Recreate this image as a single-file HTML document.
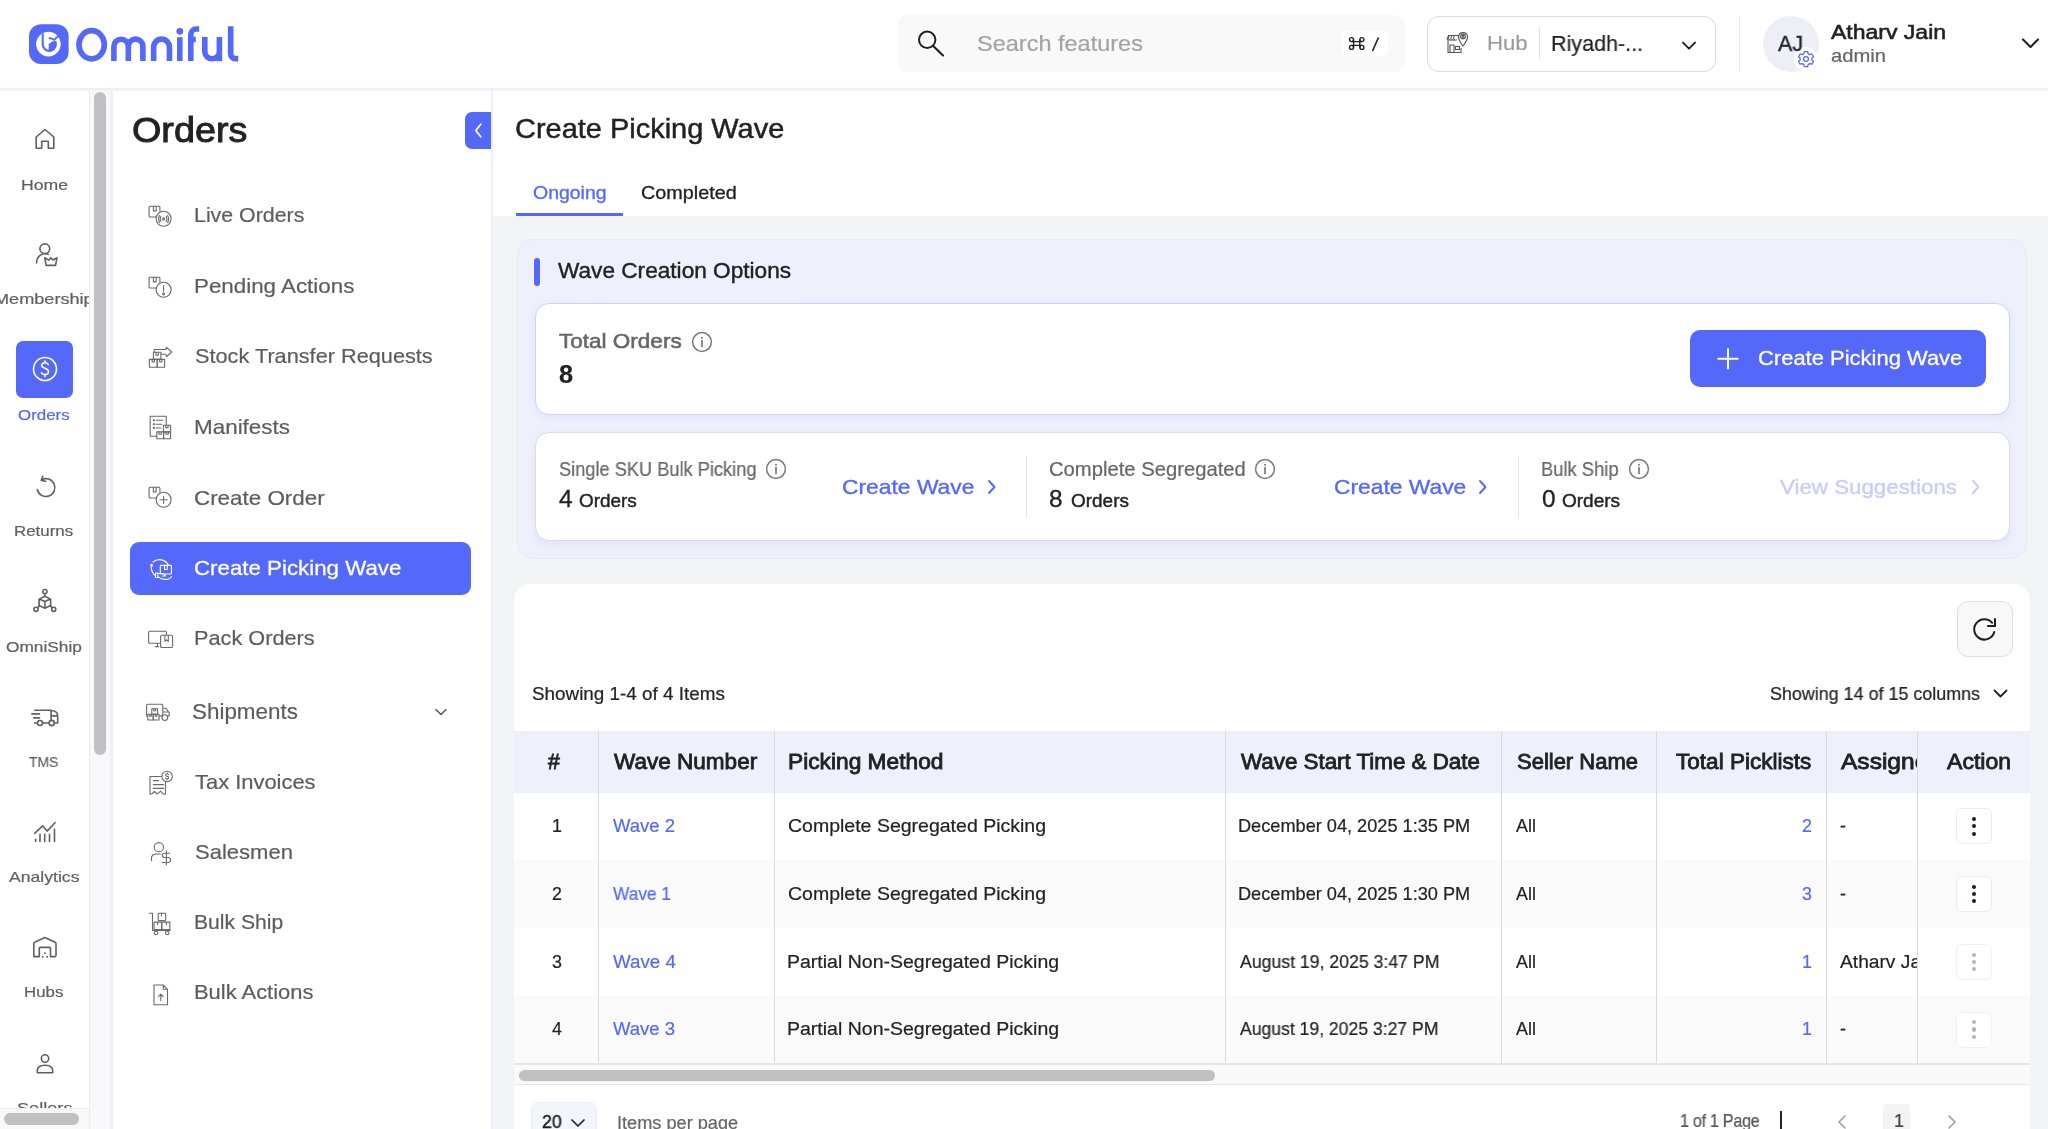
<!DOCTYPE html>
<html><head><meta charset="utf-8">
<style>
html,body{margin:0;padding:0;}
body{width:2048px;height:1129px;overflow:hidden;position:relative;background:#fff;font-family:"Liberation Sans",sans-serif;}
.a{position:absolute;box-sizing:border-box;}
.t{position:absolute;white-space:nowrap;line-height:1;will-change:transform;font-family:"Liberation Sans",sans-serif;}
.clip{position:absolute;overflow:hidden;}
svg{position:absolute;overflow:visible;}
</style></head><body>
<!-- HEADER -->
<div class="a" style="left:0;top:88px;width:2048px;height:2px;background:#eceefd"></div><div class="a" style="left:0;top:90px;width:2048px;height:1px;background:#f2f3fd"></div>
<svg style="left:0;top:0" width="260" height="90" viewBox="0 0 260 90">
  <rect x="29" y="24.3" width="39.6" height="39.6" rx="12" fill="#5468fa"/>
  <circle cx="48.4" cy="44.1" r="12.3" fill="#fff"/>
  <path d="M42.7 33.2 V44.3 A6.6 6.6 0 0 0 55.9 44.3 A6.8 6.8 0 0 0 55.2 41.2" fill="none" stroke="#5468fa" stroke-width="2"/>
  <path d="M48.7 51 V44.1 L53.2 41 L55.5 41.5 A6.7 6.7 0 0 1 48.7 51 Z" fill="#5468fa"/>
  <path d="M48.8 37.9 Q52 38.1 54.2 39.8 L58.5 36" fill="none" stroke="#5468fa" stroke-width="2"/>
  <g fill="none" stroke="#5468fa" stroke-width="5.6">
    <ellipse cx="91.65" cy="44.75" rx="12.7" ry="14.1"/>
    <path d="M113.9 61 V46.4 A7.2 7.2 0 0 1 128.3 46.4 V61 M128.3 46.4 A7.3 7.3 0 0 1 142.9 46.4 V61"/>
    <path d="M153.65 61 V47 A7.9 7.9 0 0 1 169.45 47 V61"/>
    <path d="M179.8 37.2 V61"/>
    <path d="M190.8 61 V34.5 A5.5 5.5 0 0 1 196.3 29 H199.2 M190.8 39.45 H195.8"/>
    <path d="M204.8 37 V51.5 A7.3 7.3 0 0 0 219.4 51.5 M219.4 37 V61.2"/>
    <path d="M230.7 26.2 V54 A4.6 4.6 0 0 0 235.3 58.6 H238.2"/>
  </g>
  <circle cx="179.8" cy="31.3" r="3.4" fill="#5468fa"/>
</svg>
<!-- search -->
<div class="a" style="left:897px;top:15px;width:508px;height:57px;background:#f9f9f9;border-radius:11px"></div>
<svg style="left:910px;top:24px" width="40" height="40" viewBox="0 0 40 40">
  <circle cx="17.2" cy="15.8" r="8.2" fill="none" stroke="#1f1f1f" stroke-width="2"/>
  <path d="M23 21.7 L33 31.4" stroke="#1f1f1f" stroke-width="2.1" stroke-linecap="round"/>
</svg>
<div class="a" style="left:1341px;top:31px;width:47px;height:24.5px;background:#fff;border-radius:6px"></div>
<svg style="left:1345px;top:33px" width="40" height="22" viewBox="0 0 40 22">
  <g fill="none" stroke="#1f1f1f" stroke-width="1.4">
  <path d="M8.6 6.5 V14.5 M14.8 6.5 V14.5 M6.3 8.6 H17.1 M6.3 12.4 H17.1"/>
  <circle cx="6.5" cy="6.6" r="2"/><circle cx="16.9" cy="6.6" r="2"/><circle cx="6.5" cy="14.4" r="2"/><circle cx="16.9" cy="14.4" r="2"/>
  <path d="M33.5 4.5 L27.5 18" stroke-width="1.6"/>
  </g>
</svg>
<!-- hub -->
<div class="a" style="left:1427px;top:16px;width:289px;height:56px;border:1.5px solid #d9d9d9;border-radius:12px;background:#fff"></div>
<svg style="left:1444px;top:28px" width="28" height="28" viewBox="0 0 28 28">
  <g fill="none" stroke="#555" stroke-width="1.1">
   <path d="M3 11.5 L4.5 7.5 H14 L15 10"/>
   <path d="M3 11.5 Q4 13 5.3 11.5 Q6.6 13 7.9 11.5 Q9.2 13 10.5 11.5 Q11.8 13 13.1 11.5"/>
   <path d="M5 8 L4 11.5 M7.5 8 L6.8 11.5 M10 8 L9.6 11.5"/>
   <path d="M4 13 V24.5 H17 V20"/>
   <path d="M6 24.5 V17 H10 V24.5"/>
   <rect x="11.5" y="18.5" width="4" height="3"/>
   <path d="M19 18 C15.5 13.5 14.5 11 14.5 8.5 A4.6 4.6 0 0 1 23.6 8.5 C23.6 11 22.5 13.5 19 18 Z"/>
   <circle cx="19" cy="8.5" r="2.4"/><circle cx="19" cy="8.5" r="0.9"/>
  </g>
</svg>
<div class="a" style="left:1538.5px;top:27px;width:1.5px;height:32px;background:#e1e1e1"></div>
<svg style="left:1676px;top:36px" width="26" height="20" viewBox="0 0 26 20">
  <path d="M7 6.6 L13 12.6 L19 6.6" fill="none" stroke="#222" stroke-width="2" stroke-linecap="round" stroke-linejoin="round"/>
</svg>
<div class="a" style="left:1738.5px;top:16px;width:1.5px;height:56px;background:#e6e8fb"></div>
<!-- avatar -->
<div class="a" style="left:1763px;top:15.5px;width:56px;height:56px;border-radius:50%;background:#eeeef6"></div>
<div class="a" style="left:1794px;top:46.5px;width:24px;height:24px;border-radius:50%;background:#fff"></div>
<svg style="left:1796px;top:48.5px" width="20" height="20" viewBox="0 0 20 20">
  <g fill="none" stroke="#5468fa" stroke-width="1.25" stroke-linejoin="round">
  <path d="M8.4 2.5 H11.6 L12.1 4.6 L13.8 5.6 L15.9 5 L17.5 7.7 L15.9 9.2 V11 L17.5 12.5 L15.9 15.2 L13.8 14.6 L12.1 15.6 L11.6 17.7 H8.4 L7.9 15.6 L6.2 14.6 L4.1 15.2 L2.5 12.5 L4.1 11 V9.2 L2.5 7.7 L4.1 5 L6.2 5.6 L7.9 4.6 Z"/>
  <circle cx="10" cy="10.1" r="2.4"/>
  </g>
</svg>
<svg style="left:2016px;top:32px" width="30" height="24" viewBox="0 0 30 24">
  <path d="M7 7.5 L14.5 15 L22 7.5" fill="none" stroke="#222" stroke-width="2.1" stroke-linecap="round" stroke-linejoin="round"/>
</svg>

<!-- RAIL -->
<div class="a" style="left:89px;top:90px;width:20.5px;height:1039px;background:#f8f8f8;border-left:1px solid #ececec"></div>
<div class="a" style="left:94px;top:92px;width:12px;height:663px;background:#c0c0c0;border-radius:6px"></div>
<div class="a" style="left:109.5px;top:90px;width:3px;height:1039px;background:#edeffd"></div>
<div class="a" style="left:0;top:1108px;width:89px;height:21px;background:#f8f8f8;border-top:1px solid #efefef"></div>
<div class="a" style="left:4.3px;top:1113.3px;width:75px;height:11.5px;background:#c0c0c0;border-radius:6px"></div>
<div class="a" style="left:16px;top:341px;width:57px;height:56.5px;background:#5468fa;border-radius:7px"></div>
<svg style="left:24.5px;top:119px" width="40" height="40" viewBox="0 0 40 40"><g fill="none" stroke="#606060" stroke-width="1.6" stroke-linecap="round" stroke-linejoin="round"><path d="M11.2 29.3 V18 L20 10.5 L28.8 18 V29.3 H23.3 V22.3 H16.7 V29.3 Z"/></g></svg>
<svg style="left:24.5px;top:235px" width="40" height="40" viewBox="0 0 40 40"><g fill="none" stroke="#606060" stroke-width="1.6" stroke-linecap="round" stroke-linejoin="round"><circle cx="19.8" cy="13.8" r="4.9"/><path d="M11.5 28 Q12 20 19.3 18.5 Q21.5 18.6 23.2 19.4"/><path d="M19.8 22.8 L21.1 30.4 H30.6 L31.9 22.8 L28 25 L25.9 22.9 L23.7 25.1 Z"/></g></svg>
<svg style="left:24.5px;top:349.2px" width="40" height="40" viewBox="0 0 40 40"><g fill="none" stroke="#ffffff" stroke-width="1.6" stroke-linecap="round" stroke-linejoin="round"><circle cx="20" cy="20" r="11.5"/><path d="M23.3 15.6 C22.6 14.3 21.4 13.8 20 13.8 C18 13.8 16.7 14.9 16.7 16.5 C16.7 20 23.5 18.6 23.5 22.6 C23.5 24.4 22 25.6 20 25.6 C18.2 25.6 16.9 24.8 16.3 23.6 M20 12 V13.8 M20 25.6 V27.6"/></g></svg>
<svg style="left:24.5px;top:465.7px" width="40" height="40" viewBox="0 0 40 40"><g fill="none" stroke="#606060" stroke-width="1.6" stroke-linecap="round" stroke-linejoin="round"><path d="M16.5 13.9 A8.9 8.9 0 1 1 12.3 23.5"/><path d="M17.8 10.2 L16.3 14.4 L20.7 15.3"/></g></svg>
<svg style="left:24.5px;top:581px" width="40" height="40" viewBox="0 0 40 40"><g fill="none" stroke="#606060" stroke-width="1.6" stroke-linecap="round" stroke-linejoin="round"><path d="M19.9 15.3 L25.6 18.1 V24.6 L19.9 27.2 L14.1 24.6 V18.1 Z M14.1 18.1 L19.9 20.6 L25.6 18.1 M19.9 20.6 V27.2 M19.9 12.7 V15.3 M12.7 27 L14.1 24.6 M27 27 L25.6 24.6"/><circle cx="19.9" cy="10.6" r="2.1"/><circle cx="11" cy="28.3" r="2.1"/><circle cx="28.7" cy="28.3" r="2.1"/></g></svg>
<svg style="left:24.5px;top:697px" width="40" height="40" viewBox="0 0 40 40"><g fill="none" stroke="#606060" stroke-width="1.6" stroke-linecap="round" stroke-linejoin="round"><path d="M9.7 13.2 H26.1 V23.3 M26.1 13.8 H28 Q32.7 14.5 32.7 19.5 V26 H29.4 M26.1 18.9 H32.5 M6.8 16.9 H14.5 M8.8 20.9 H14.5 M9.7 26 H12.3 M17.6 26 H23.9"/><circle cx="15" cy="26" r="2.5"/><circle cx="26.7" cy="26" r="2.6"/></g></svg>
<svg style="left:24.5px;top:812px" width="40" height="40" viewBox="0 0 40 40"><g fill="none" stroke="#606060" stroke-width="1.6" stroke-linecap="round" stroke-linejoin="round"><path d="M9.7 21.3 L17.6 13.8 L22.1 19.1 L30 10.7 M10.6 29.4 V27.3 M15 29.4 V22.3 M19.7 29.4 V22.3 M24.5 29.4 V22.3 M29.5 29.4 V17.2"/></g></svg>
<svg style="left:24.5px;top:928px" width="40" height="40" viewBox="0 0 40 40"><g fill="none" stroke="#606060" stroke-width="1.6" stroke-linecap="round" stroke-linejoin="round"><path d="M8.8 28.6 V15.5 Q8.8 14.6 9.8 14.3 L19.9 9.6 L30 14.3 Q31 14.6 31 15.5 V27.6 Q31 28.6 30 28.6 H25.5 V20.5 Q25.5 19.4 24.4 19.4 H15.4 Q14.3 19.4 14.3 20.5 V28.6 H9.8 Q8.8 28.6 8.8 27.6"/><path d="M17.7 28.6 V28.7 M22.1 28.6 V28.7 M19.9 25.2 V25.3" stroke-width="1.9"/></g></svg>
<svg style="left:24.5px;top:1043.5px" width="40" height="40" viewBox="0 0 40 40"><g fill="none" stroke="#606060" stroke-width="1.6" stroke-linecap="round" stroke-linejoin="round"><circle cx="20" cy="14.5" r="3.7"/><path d="M12.3 28.7 V26.8 C12.3 23 15.5 21.3 20 21.3 C24.5 21.3 27.7 23 27.7 26.8 V28.7 Z"/></g></svg>

<!-- SIDEBAR -->
<div class="a" style="left:465px;top:112px;width:26px;height:37px;background:#5468fa;border-radius:7px 0 0 7px"></div>
<svg style="left:465px;top:112px" width="26" height="37" viewBox="0 0 26 37">
  <path d="M15.8 12.2 L10.8 18.5 L15.8 24.8" fill="none" stroke="#fff" stroke-width="1.7" stroke-linecap="round" stroke-linejoin="round"/>
</svg>
<div class="a" style="left:491px;top:90px;width:2px;height:1039px;background:#edeffd"></div>
<div class="a" style="left:130px;top:542px;width:341px;height:53.4px;background:#5468fa;border-radius:9px"></div>
<svg style="left:428px;top:704px" width="24" height="20" viewBox="0 0 24 20">
  <path d="M8 5.5 L13 10.5 L18 5.5" fill="none" stroke="#5c5c5c" stroke-width="1.6" stroke-linecap="round" stroke-linejoin="round"/>
</svg>
<svg style="left:144px;top:200px" width="32" height="32" viewBox="0 0 32 32"><g fill="none" stroke="#6a6a6a" stroke-width="1.1" stroke-linecap="round" stroke-linejoin="round"><path d="M12.6 17 H6.1 Q5.1 17 5.1 16 V7.2 Q5.1 6.2 6.1 6.2 H14.9 Q15.9 6.2 15.9 7.2 V11.3"/><path d="M9.4 6.2 V10.9 H12.2 V6.2"/><circle cx="19.6" cy="18.8" r="7.5"/><circle cx="19.6" cy="18.9" r="1"/><path d="M17 16.2 Q15.6 18.9 17 21.6 M22.2 16.2 Q23.6 18.9 22.2 21.6 M15.5 15.4 Q13.7 18.9 15.5 22.4 M23.7 15.4 Q25.5 18.9 23.7 22.4"/></g></svg>
<svg style="left:144px;top:270.5px" width="32" height="32" viewBox="0 0 32 32"><g fill="none" stroke="#6a6a6a" stroke-width="1.1" stroke-linecap="round" stroke-linejoin="round"><path d="M12.6 17 H6.1 Q5.1 17 5.1 16 V7.2 Q5.1 6.2 6.1 6.2 H14.9 Q15.9 6.2 15.9 7.2 V11.3"/><path d="M9.4 6.2 V10.9 H12.2 V6.2"/><circle cx="19.6" cy="18.8" r="7.5"/><path d="M19.6 14.5 V20.3"/><circle cx="19.6" cy="23" r="0.9"/></g></svg>
<svg style="left:144px;top:340px" width="32" height="32" viewBox="0 0 32 32"><g fill="none" stroke="#6a6a6a" stroke-width="1.1" stroke-linecap="round" stroke-linejoin="round"><path d="M10.2 12.2 V9.5 H21.7 L22.6 7.3 L27.8 12 L22.6 16.5 L21.7 14.3 H16.9"/><rect x="9.4" y="12.3" width="7.5" height="7.1"/><path d="M12 12.3 V15.3 H14.3 V12.3"/><rect x="5.4" y="19.4" width="7.8" height="7.9"/><rect x="13.2" y="19.4" width="7.4" height="7.9"/><path d="M8.2 19.4 V22 H10.4 V19.4 M15.7 19.4 V22 H17.9 V19.4"/></g></svg>
<svg style="left:144px;top:410px" width="32" height="32" viewBox="0 0 32 32"><g fill="none" stroke="#6a6a6a" stroke-width="1.1" stroke-linecap="round" stroke-linejoin="round"><path d="M12.8 26.3 H6.2 V6.2 H22.2 V15.2"/><circle cx="9.9" cy="10.3" r="0.6"/><circle cx="9.9" cy="14.2" r="0.6"/><circle cx="9.9" cy="18" r="0.6"/><path d="M12.2 10.3 H18.8 M12.2 14.2 H17.8 M12.2 18 H16.8"/><rect x="19.4" y="15.2" width="7.2" height="6.8"/><rect x="12.8" y="21.9" width="6.8" height="6.8"/><rect x="19.6" y="21.9" width="7" height="6.8"/><path d="M21.7 15.2 V17.6 H24.1 V15.2 M15 21.9 V24.3 H17.3 V21.9 M21.9 21.9 V24.3 H24.3 V21.9"/></g></svg>
<svg style="left:144px;top:481px" width="32" height="32" viewBox="0 0 32 32"><g fill="none" stroke="#6a6a6a" stroke-width="1.1" stroke-linecap="round" stroke-linejoin="round"><path d="M12.6 17 H6.1 Q5.1 17 5.1 16 V7.2 Q5.1 6.2 6.1 6.2 H14.9 Q15.9 6.2 15.9 7.2 V11.3"/><path d="M9.4 6.2 V10.9 H12.2 V6.2"/><circle cx="19.6" cy="18.8" r="7.5"/><path d="M19.6 15.2 V22.4 M16 18.8 H23.2"/></g></svg>
<svg style="left:144px;top:551px" width="32" height="32" viewBox="0 0 32 32"><g fill="none" stroke="#ffffff" stroke-width="1.15" stroke-linecap="round" stroke-linejoin="round"><path d="M9 11 A10 10 0 0 1 24.5 14.3"/><path d="M6.5 14.4 L7.8 13.2 L8.6 15 Z M7.1 15 Q6.8 19.8 10.5 24"/><rect x="16.3" y="14.3" width="11.1" height="8.7" rx="0.8"/><path d="M20.5 14.3 V18.5 H23.2 V14.3"/><path d="M11.5 22 H13.8 V26.5 H11.5 Z M13.8 22.5 H18.5 Q21 23 21.5 25 H18.5 M13.8 25.8 Q17.5 28 19.5 28.3 H23.3 Q25.8 28.3 27.5 25.5"/></g></svg>
<svg style="left:144px;top:622px" width="32" height="32" viewBox="0 0 32 32"><g fill="none" stroke="#6a6a6a" stroke-width="1.1" stroke-linecap="round" stroke-linejoin="round"><path d="M15.5 21.2 H5.9 Q4.6 21.2 4.6 19.9 V10.5 Q4.6 9.2 5.9 9.2 H21.2 Q22.5 9.2 22.5 10.5 V12.6"/><path d="M13.5 21.4 V24.6 M11.2 24.6 H14.6"/><rect x="16.6" y="13.3" width="12" height="12.2" rx="1.3"/><path d="M20.9 13.3 V19.3 L22.6 18 L24.3 19.3 V13.3"/></g></svg>
<svg style="left:140px;top:695px" width="36" height="36" viewBox="0 0 36 36"><g fill="none" stroke="#6a6a6a" stroke-width="1.1" stroke-linecap="round" stroke-linejoin="round"><path d="M7.5 21 H6.6 V10.5 Q6.6 9.3 7.8 9.3 H21.8 Q22.8 9.3 22.8 10.5 V20.9 H20 M22.8 13.3 H26 L29.2 17.8 V20.9 H27.8 M22.8 17 H28.4 M19.5 20.9 H21"/><circle cx="24.8" cy="22.6" r="2.9"/><rect x="11.8" y="13.7" width="5.8" height="5.6"/><rect x="7.8" y="19.3" width="5.4" height="5.7"/><rect x="13.2" y="19.3" width="5.8" height="5.7"/><path d="M13.7 13.7 V15.7 H15.6 V13.7 M9.7 19.3 V21.2 H11.4 V19.3 M15.3 19.3 V21.2 H17 V19.3"/></g></svg>
<svg style="left:144px;top:765px" width="32" height="32" viewBox="0 0 32 32"><g fill="none" stroke="#6a6a6a" stroke-width="1.1" stroke-linecap="round" stroke-linejoin="round"><path d="M17.4 11.5 H6 V29.3 L8.2 28.5 L10.5 26.5 L12.8 28.9 L14.8 27.8 L16.6 26.1 L18.8 28.6 L21.5 29.2 V17.2"/><circle cx="23.1" cy="11.4" r="5.2"/><path d="M24.5 9.5 Q23.9 8.8 23 8.8 Q21.6 8.8 21.6 10 Q21.6 11.2 23.1 11.4 Q24.6 11.6 24.6 12.8 Q24.6 13.9 23.1 13.9 Q22 13.9 21.5 13.2 M23.1 7.9 V8.8 M23.1 13.9 V14.8"/><path d="M9.4 15.7 H14.7 M9.4 19.6 H19.6 M9.4 23.4 H19.6" stroke-width="1.2"/></g></svg>
<svg style="left:144px;top:836px" width="32" height="32" viewBox="0 0 32 32"><g fill="none" stroke="#6a6a6a" stroke-width="1.1" stroke-linecap="round" stroke-linejoin="round"><circle cx="14.9" cy="11.2" r="4.6"/><path d="M7.5 24.7 V21 Q8.5 18 12 18 H16.4"/><path d="M22.4 15 V28.7 M25.7 17.3 H20.2 Q18.3 17.3 18.3 19.4 Q18.3 21.3 20.8 21.5 H23.8 Q26.6 21.7 26.6 24 Q26.6 26.5 23.8 26.5 H18.2"/></g></svg>
<svg style="left:144px;top:906px" width="32" height="32" viewBox="0 0 32 32"><g fill="none" stroke="#6a6a6a" stroke-width="1.1" stroke-linecap="round" stroke-linejoin="round"><path d="M5.3 7.3 H8.5 V24.5 H26.3"/><rect x="14.2" y="7.2" width="7.5" height="7.4" rx="0.6"/><rect x="10.1" y="16.1" width="7.6" height="7.4"/><rect x="17.8" y="16.1" width="8" height="7.4"/><path d="M17.5 7.2 V9.7 M13.6 16.1 V18.5 M22.4 16.1 V18.5"/><circle cx="12" cy="27" r="1.8"/><circle cx="23.2" cy="27" r="1.8"/></g></svg>
<svg style="left:145px;top:977px" width="32" height="32" viewBox="0 0 32 32"><g fill="none" stroke="#6a6a6a" stroke-width="1.1" stroke-linecap="round" stroke-linejoin="round"><path d="M9 8 H18.3 L22.5 12.3 V27.7 H9 Z M18.3 8 V12.3 H22.5"/><path d="M15.8 23.7 V17.4 M13.4 19.6 L15.8 17.2 L18.2 19.6"/></g></svg>

<!-- MAIN -->
<div class="a" style="left:493px;top:216px;width:1555px;height:913px;background:#f3f4f6"></div>
<div class="a" style="left:516px;top:213px;width:107px;height:3px;background:#5468fa"></div>
<!-- wave creation options -->
<div class="a" style="left:516.5px;top:239px;width:1510.5px;height:320px;background:#eef0fc;border:1px solid #e7e9f6;border-radius:16px"></div>
<div class="a" style="left:534.2px;top:257.8px;width:5.8px;height:28px;background:#5468fa;border-radius:3px"></div>
<div class="a" style="left:535px;top:303px;width:1474.5px;height:111.5px;background:#fff;border:1.5px solid #ccd1fb;border-radius:14px;box-shadow:0 3px 8px rgba(80,90,160,0.08)"></div>
<div class="a" style="left:1690px;top:330.2px;width:296px;height:56.7px;background:#5468fa;border-radius:10px"></div>
<svg style="left:1712px;top:343px" width="32" height="32" viewBox="0 0 32 32">
  <path d="M16 6 V25.4 M6.3 15.7 H25.7" stroke="#fff" stroke-width="2" stroke-linecap="round"/>
</svg>
<div class="a" style="left:535px;top:432px;width:1474.5px;height:109px;background:#fff;border:1px solid #dcdcdf;border-radius:14px;box-shadow:0 3px 8px rgba(80,90,160,0.08)"></div>
<div class="a" style="left:1025.5px;top:456px;width:1.5px;height:62px;background:#e5e5e5"></div>
<div class="a" style="left:1517.5px;top:456px;width:1.5px;height:62px;background:#e5e5e5"></div>
<svg style="left:689.7px;top:329.6px" width="24" height="24" viewBox="0 0 24 24"><circle cx="12" cy="12" r="9.4" fill="none" stroke="#7a7a7a" stroke-width="1.5"/><path d="M12 10.6 V16.4" stroke="#7a7a7a" stroke-width="1.7" stroke-linecap="round"/><circle cx="12" cy="7.7" r="1.05" fill="#7a7a7a"/></svg>
<svg style="left:763.8px;top:457.3px" width="24" height="24" viewBox="0 0 24 24"><circle cx="12" cy="12" r="9.4" fill="none" stroke="#7a7a7a" stroke-width="1.5"/><path d="M12 10.6 V16.4" stroke="#7a7a7a" stroke-width="1.7" stroke-linecap="round"/><circle cx="12" cy="7.7" r="1.05" fill="#7a7a7a"/></svg>
<svg style="left:1252.6px;top:457.3px" width="24" height="24" viewBox="0 0 24 24"><circle cx="12" cy="12" r="9.4" fill="none" stroke="#7a7a7a" stroke-width="1.5"/><path d="M12 10.6 V16.4" stroke="#7a7a7a" stroke-width="1.7" stroke-linecap="round"/><circle cx="12" cy="7.7" r="1.05" fill="#7a7a7a"/></svg>
<svg style="left:1627.1px;top:457.3px" width="24" height="24" viewBox="0 0 24 24"><circle cx="12" cy="12" r="9.4" fill="none" stroke="#7a7a7a" stroke-width="1.5"/><path d="M12 10.6 V16.4" stroke="#7a7a7a" stroke-width="1.7" stroke-linecap="round"/><circle cx="12" cy="7.7" r="1.05" fill="#7a7a7a"/></svg>
<svg style="left:983.9px;top:475px" width="20" height="24" viewBox="0 0 20 24"><path d="M5 6 L10.5 12 L5 18" fill="none" stroke="#5468fa" stroke-width="1.9" stroke-linecap="round" stroke-linejoin="round"/></svg>
<svg style="left:1475.4px;top:475px" width="20" height="24" viewBox="0 0 20 24"><path d="M5 6 L10.5 12 L5 18" fill="none" stroke="#5468fa" stroke-width="1.9" stroke-linecap="round" stroke-linejoin="round"/></svg>
<svg style="left:1967.5px;top:475px" width="20" height="24" viewBox="0 0 20 24"><path d="M5 6 L10.5 12 L5 18" fill="none" stroke="#c7ccfb" stroke-width="1.9" stroke-linecap="round" stroke-linejoin="round"/></svg>

<!-- table card -->
<div class="a" style="left:514px;top:583.8px;width:1516px;height:600px;background:#fff;border-radius:16px"></div>
<div class="a" style="left:1956.6px;top:601px;width:56px;height:56px;background:#f8f8f9;border:1.5px solid #dedede;border-radius:11px"></div>
<svg style="left:1966px;top:611px" width="36" height="36" viewBox="0 0 36 36">
  <path d="M26.2 11.8 A10.2 10.2 0 1 0 28.25 21.0" fill="none" stroke="#1f1f1f" stroke-width="2" stroke-linecap="round"/>
  <path d="M29 7.2 V15.1 H21.2" fill="none" stroke="#1f1f1f" stroke-width="2" stroke-linecap="butt" stroke-linejoin="miter"/>
</svg>
<svg style="left:1990px;top:684px" width="22" height="20" viewBox="0 0 22 20">
  <path d="M4.5 6.5 L10.5 12.5 L16.5 6.5" fill="none" stroke="#222" stroke-width="1.8" stroke-linecap="round" stroke-linejoin="round"/>
</svg>
<div class="a" style="left:514px;top:731px;width:1516px;height:62px;background:#eef0fc"></div>
<div class="a" style="left:514px;top:793px;width:1516px;height:67px;background:#fff"></div>
<div class="a" style="left:514px;top:860px;width:1516px;height:68px;background:#fafafa"></div>
<div class="a" style="left:514px;top:928px;width:1516px;height:68px;background:#fff"></div>
<div class="a" style="left:514px;top:996px;width:1516px;height:67px;background:#fafafa"></div>
<div class="a" style="left:514px;top:1063px;width:1516px;height:2px;background:#e6e6e6"></div>
<div class="a" style="left:514px;top:1065px;width:1516px;height:19px;background:#f9f9f9"></div>
<div class="a" style="left:519px;top:1070px;width:696px;height:11px;background:#c0c0c0;border-radius:6px"></div>
<div class="a" style="left:514px;top:1084px;width:1516px;height:1px;background:#e8e8e8"></div>
<div class="a" style="left:597.75px;top:731px;width:1.5px;height:332px;background:#dadada"></div>
<div class="a" style="left:773.75px;top:731px;width:1.5px;height:332px;background:#dadada"></div>
<div class="a" style="left:1224.75px;top:731px;width:1.5px;height:332px;background:#dadada"></div>
<div class="a" style="left:1500.75px;top:731px;width:1.5px;height:332px;background:#dadada"></div>
<div class="a" style="left:1655.75px;top:731px;width:1.5px;height:332px;background:#dadada"></div>
<div class="a" style="left:1825.75px;top:731px;width:1.5px;height:332px;background:#dadada"></div>
<div class="a" style="left:1916.75px;top:731px;width:1.5px;height:332px;background:#dadada"></div>
<div class="a" style="left:1956.4px;top:808.4px;width:35.2px;height:36px;background:#fff;border:1px solid #e6e9fc;border-radius:6px"></div>
<div class="a" style="left:1971.9px;top:817.1px;width:4.2px;height:4.2px;border-radius:50%;background:#1f1f1f"></div>
<div class="a" style="left:1971.9px;top:824.3px;width:4.2px;height:4.2px;border-radius:50%;background:#1f1f1f"></div>
<div class="a" style="left:1971.9px;top:831.5px;width:4.2px;height:4.2px;border-radius:50%;background:#1f1f1f"></div>
<div class="a" style="left:1956.4px;top:876.0px;width:35.2px;height:36px;background:#fff;border:1px solid #e6e9fc;border-radius:6px"></div>
<div class="a" style="left:1971.9px;top:884.7px;width:4.2px;height:4.2px;border-radius:50%;background:#1f1f1f"></div>
<div class="a" style="left:1971.9px;top:891.9px;width:4.2px;height:4.2px;border-radius:50%;background:#1f1f1f"></div>
<div class="a" style="left:1971.9px;top:899.1px;width:4.2px;height:4.2px;border-radius:50%;background:#1f1f1f"></div>
<div class="a" style="left:1956.4px;top:943.8px;width:35.2px;height:36px;background:#fff;border:1px solid #eef0fb;border-radius:6px"></div>
<div class="a" style="left:1971.9px;top:952.5px;width:4.2px;height:4.2px;border-radius:50%;background:#b5b5b5"></div>
<div class="a" style="left:1971.9px;top:959.7px;width:4.2px;height:4.2px;border-radius:50%;background:#b5b5b5"></div>
<div class="a" style="left:1971.9px;top:966.9px;width:4.2px;height:4.2px;border-radius:50%;background:#b5b5b5"></div>
<div class="a" style="left:1956.4px;top:1011.5px;width:35.2px;height:36px;background:#fff;border:1px solid #eef0fb;border-radius:6px"></div>
<div class="a" style="left:1971.9px;top:1020.2px;width:4.2px;height:4.2px;border-radius:50%;background:#b5b5b5"></div>
<div class="a" style="left:1971.9px;top:1027.4px;width:4.2px;height:4.2px;border-radius:50%;background:#b5b5b5"></div>
<div class="a" style="left:1971.9px;top:1034.6px;width:4.2px;height:4.2px;border-radius:50%;background:#b5b5b5"></div>
<!-- footer -->
<div class="a" style="left:531.4px;top:1102.3px;width:66px;height:40px;background:#f4f5fa;border:1px solid #e9ebfb;border-radius:8px"></div>
<svg style="left:566px;top:1114px" width="24" height="16" viewBox="0 0 24 16">
  <path d="M6 6 L12 12 L18 6" fill="none" stroke="#222" stroke-width="1.7" stroke-linecap="round" stroke-linejoin="round"/>
</svg>
<div class="a" style="left:1780.2px;top:1111px;width:2px;height:18px;background:#222"></div>
<svg style="left:1832px;top:1110px" width="20" height="20" viewBox="0 0 20 20">
  <path d="M13 6 L7 12 L13 18" fill="none" stroke="#9a9a9a" stroke-width="1.5" stroke-linecap="round" stroke-linejoin="round"/>
</svg>
<div class="a" style="left:1883.2px;top:1104px;width:27.2px;height:30px;background:#f3f3f3;border-radius:4px"></div>
<svg style="left:1942px;top:1110px" width="20" height="20" viewBox="0 0 20 20">
  <path d="M7 6 L13 12 L7 18" fill="none" stroke="#9a9a9a" stroke-width="1.5" stroke-linecap="round" stroke-linejoin="round"/>
</svg>

<div class="t" style="left:976.80px;top:33.00px;font-size:21.80px;color:#a3a3a3;transform:scaleX(1.0781);transform-origin:left center;-webkit-text-stroke:0.2px #a3a3a3;">Search features</div>
<div class="t" style="left:1486.93px;top:33.00px;font-size:20.79px;color:#9a9a9a;transform:scaleX(1.0672);transform-origin:left center;-webkit-text-stroke:0.2px #9a9a9a;">Hub</div>
<div class="t" style="left:1551.03px;top:33.00px;font-size:22.09px;color:#222;transform:scaleX(0.9746);transform-origin:left center;-webkit-text-stroke:0.2px #222;">Riyadh-...</div>
<div class="t" style="left:1778.00px;top:33.00px;font-size:22.09px;color:#222;transform:scaleX(0.9706);transform-origin:left center;-webkit-text-stroke:0.35px #222;">AJ</div>
<div class="t" style="left:1830.80px;top:21.00px;font-size:21.08px;color:#222;transform:scaleX(1.0913);transform-origin:left center;-webkit-text-stroke:0.6px #222;">Atharv Jain</div>
<div class="t" style="left:1831.00px;top:48.00px;font-size:17.73px;color:#666;transform:scaleX(1.1391);transform-origin:left center;-webkit-text-stroke:0.2px #666;">admin</div>
<div class="clip" style="left:0px;width:89px;top:167.00px;height:35.12px"><div class="t" style="left:20.73px;top:177.00px;font-size:15.12px;color:#5f5f5f;transform:scaleX(1.1671);transform-origin:left center;-webkit-text-stroke:0.2px #5f5f5f;left:20.73px;top:10px">Home</div></div>
<div class="clip" style="left:0px;width:89px;top:281.00px;height:35.12px"><div class="t" style="left:-5.70px;top:291.00px;font-size:15.12px;color:#5f5f5f;transform:scaleX(1.1991);transform-origin:left center;-webkit-text-stroke:0.2px #5f5f5f;left:-5.70px;top:10px">Membership</div></div>
<div class="clip" style="left:0px;width:89px;top:397.00px;height:35.12px"><div class="t" style="left:18.20px;top:407.00px;font-size:15.12px;color:#5468fa;transform:scaleX(1.1196);transform-origin:left center;-webkit-text-stroke:0.2px #5468fa;left:18.20px;top:10px">Orders</div></div>
<div class="clip" style="left:0px;width:89px;top:513.00px;height:35.12px"><div class="t" style="left:13.78px;top:523.00px;font-size:15.12px;color:#5f5f5f;transform:scaleX(1.1194);transform-origin:left center;-webkit-text-stroke:0.2px #5f5f5f;left:13.78px;top:10px">Returns</div></div>
<div class="clip" style="left:0px;width:89px;top:629.00px;height:35.12px"><div class="t" style="left:6.40px;top:639.00px;font-size:15.12px;color:#5f5f5f;transform:scaleX(1.1435);transform-origin:left center;-webkit-text-stroke:0.2px #5f5f5f;left:6.40px;top:10px">OmniShip</div></div>
<div class="clip" style="left:0px;width:89px;top:744.00px;height:35.12px"><div class="t" style="left:29.40px;top:754.00px;font-size:15.12px;color:#5f5f5f;transform:scaleX(0.9209);transform-origin:left center;-webkit-text-stroke:0.2px #5f5f5f;left:29.40px;top:10px">TMS</div></div>
<div class="clip" style="left:0px;width:89px;top:859.00px;height:35.12px"><div class="t" style="left:8.90px;top:869.00px;font-size:15.12px;color:#5f5f5f;transform:scaleX(1.1658);transform-origin:left center;-webkit-text-stroke:0.2px #5f5f5f;left:8.90px;top:10px">Analytics</div></div>
<div class="clip" style="left:0px;width:89px;top:974.00px;height:35.12px"><div class="t" style="left:23.59px;top:984.00px;font-size:15.12px;color:#5f5f5f;transform:scaleX(1.1147);transform-origin:left center;-webkit-text-stroke:0.2px #5f5f5f;left:23.59px;top:10px">Hubs</div></div>
<div class="clip" style="left:0px;width:89px;top:1090.00px;height:18.00px"><div class="t" style="left:16.50px;top:1100.00px;font-size:15.12px;color:#5f5f5f;transform:scaleX(1.2010);transform-origin:left center;-webkit-text-stroke:0.2px #5f5f5f;left:16.50px;top:10px">Sellers</div></div>
<div class="t" style="left:131.91px;top:113.00px;font-size:34.59px;color:#222;transform:scaleX(1.0921);transform-origin:left center;-webkit-text-stroke:0.9px #222;">Orders</div>
<div class="t" style="left:194.28px;top:205.00px;font-size:20.93px;color:#5c5c5c;transform:scaleX(1.0209);transform-origin:left center;-webkit-text-stroke:0.2px #5c5c5c;">Live Orders</div>
<div class="t" style="left:194.23px;top:276.00px;font-size:20.93px;color:#5c5c5c;transform:scaleX(1.0685);transform-origin:left center;-webkit-text-stroke:0.2px #5c5c5c;">Pending Actions</div>
<div class="t" style="left:195.30px;top:346.00px;font-size:20.93px;color:#5c5c5c;transform:scaleX(1.0376);transform-origin:left center;-webkit-text-stroke:0.2px #5c5c5c;">Stock Transfer Requests</div>
<div class="t" style="left:194.23px;top:417.00px;font-size:20.93px;color:#5c5c5c;transform:scaleX(1.0719);transform-origin:left center;-webkit-text-stroke:0.2px #5c5c5c;">Manifests</div>
<div class="t" style="left:194.23px;top:488.00px;font-size:20.93px;color:#5c5c5c;transform:scaleX(1.0700);transform-origin:left center;-webkit-text-stroke:0.2px #5c5c5c;">Create Order</div>
<div class="t" style="left:194.23px;top:558.00px;font-size:20.93px;color:#ffffff;transform:scaleX(1.0657);transform-origin:left center;-webkit-text-stroke:0.3px #ffffff;">Create Picking Wave</div>
<div class="t" style="left:194.26px;top:628.00px;font-size:20.93px;color:#5c5c5c;transform:scaleX(1.0374);transform-origin:left center;-webkit-text-stroke:0.2px #5c5c5c;">Pack Orders</div>
<div class="t" style="left:195.30px;top:772.00px;font-size:20.93px;color:#5c5c5c;transform:scaleX(1.0474);transform-origin:left center;-webkit-text-stroke:0.2px #5c5c5c;">Tax Invoices</div>
<div class="t" style="left:195.30px;top:842.00px;font-size:20.93px;color:#5c5c5c;transform:scaleX(1.0530);transform-origin:left center;-webkit-text-stroke:0.2px #5c5c5c;">Salesmen</div>
<div class="t" style="left:194.29px;top:912.00px;font-size:20.93px;color:#5c5c5c;transform:scaleX(1.0086);transform-origin:left center;-webkit-text-stroke:0.2px #5c5c5c;">Bulk Ship</div>
<div class="t" style="left:194.25px;top:982.00px;font-size:20.93px;color:#5c5c5c;transform:scaleX(1.0479);transform-origin:left center;-webkit-text-stroke:0.2px #5c5c5c;">Bulk Actions</div>
<div class="t" style="left:192.00px;top:701.00px;font-size:21.80px;color:#5c5c5c;transform:scaleX(1.0283);transform-origin:left center;-webkit-text-stroke:0.2px #5c5c5c;">Shipments</div>
<div class="t" style="left:515.33px;top:116.00px;font-size:27.04px;color:#222;transform:scaleX(1.0710);transform-origin:left center;-webkit-text-stroke:0.45px #222;">Create Picking Wave</div>
<div class="t" style="left:533.10px;top:185.00px;font-size:17.59px;color:#5468fa;transform:scaleX(1.1068);transform-origin:left center;-webkit-text-stroke:0.3px #5468fa;">Ongoing</div>
<div class="t" style="left:640.50px;top:185.00px;font-size:17.59px;color:#222;transform:scaleX(1.1255);transform-origin:left center;-webkit-text-stroke:0.3px #222;">Completed</div>
<div class="t" style="left:557.60px;top:260.00px;font-size:21.95px;color:#222;transform:scaleX(1.0314);transform-origin:left center;-webkit-text-stroke:0.4px #222;">Wave Creation Options</div>
<div class="t" style="left:559.00px;top:331.00px;font-size:20.64px;color:#666;transform:scaleX(1.0918);transform-origin:left center;-webkit-text-stroke:0.55px #666;">Total Orders</div>
<div class="t" style="left:559.00px;top:362.00px;font-size:25.29px;color:#222;font-weight:700;-webkit-text-stroke:0.2px #222;">8</div>
<div class="t" style="left:1757.95px;top:348.00px;font-size:20.93px;color:#fff;transform:scaleX(1.0501);transform-origin:left center;-webkit-text-stroke:0.3px #fff;">Create Picking Wave</div>
<div class="t" style="left:558.70px;top:460.00px;font-size:19.62px;color:#666;transform:scaleX(0.9290);transform-origin:left center;-webkit-text-stroke:0.2px #666;">Single SKU Bulk Picking</div>
<div class="t" style="left:559.00px;top:487.00px;font-size:24.42px;color:#222;-webkit-text-stroke:0.3px #222;">4</div>
<div class="t" style="left:579.20px;top:492.00px;font-size:18.02px;color:#222;transform:scaleX(1.0499);transform-origin:left center;-webkit-text-stroke:0.4px #222;">Orders</div>
<div class="t" style="left:842.39px;top:477.00px;font-size:20.64px;color:#5468fa;transform:scaleX(1.1073);transform-origin:left center;-webkit-text-stroke:0.35px #5468fa;">Create Wave</div>
<div class="t" style="left:1048.77px;top:460.00px;font-size:19.62px;color:#666;transform:scaleX(1.0314);transform-origin:left center;-webkit-text-stroke:0.2px #666;">Complete Segregated</div>
<div class="t" style="left:1049.10px;top:487.00px;font-size:24.42px;color:#222;-webkit-text-stroke:0.3px #222;">8</div>
<div class="t" style="left:1070.50px;top:492.00px;font-size:18.02px;color:#222;transform:scaleX(1.0518);transform-origin:left center;-webkit-text-stroke:0.4px #222;">Orders</div>
<div class="t" style="left:1333.79px;top:477.00px;font-size:20.64px;color:#5468fa;transform:scaleX(1.1057);transform-origin:left center;-webkit-text-stroke:0.35px #5468fa;">Create Wave</div>
<div class="t" style="left:1540.76px;top:460.00px;font-size:19.62px;color:#666;transform:scaleX(0.9361);transform-origin:left center;-webkit-text-stroke:0.2px #666;">Bulk Ship</div>
<div class="t" style="left:1542.00px;top:487.00px;font-size:24.42px;color:#222;-webkit-text-stroke:0.3px #222;">0</div>
<div class="t" style="left:1562.20px;top:492.00px;font-size:18.02px;color:#222;transform:scaleX(1.0554);transform-origin:left center;-webkit-text-stroke:0.4px #222;">Orders</div>
<div class="t" style="left:1780.20px;top:477.00px;font-size:20.64px;color:#c7ccfb;transform:scaleX(1.0817);transform-origin:left center;-webkit-text-stroke:0.35px #c7ccfb;">View Suggestions</div>
<div class="t" style="left:531.60px;top:685.00px;font-size:18.17px;color:#222;transform:scaleX(1.0387);transform-origin:left center;-webkit-text-stroke:0.2px #222;">Showing 1-4 of 4 Items</div>
<div class="t" style="left:1769.60px;top:685.00px;font-size:18.02px;color:#222;transform:scaleX(0.9938);transform-origin:left center;-webkit-text-stroke:0.2px #222;">Showing 14 of 15 columns</div>
<div class="t" style="left:547.50px;top:751.00px;font-size:21.22px;color:#222;-webkit-text-stroke:0.8px #222;">#</div>
<div class="t" style="left:613.90px;top:751.00px;font-size:21.22px;color:#222;transform:scaleX(1.0620);transform-origin:left center;-webkit-text-stroke:0.8px #222;">Wave Number</div>
<div class="t" style="left:788.43px;top:751.00px;font-size:21.22px;color:#222;transform:scaleX(1.0714);transform-origin:left center;-webkit-text-stroke:0.8px #222;">Picking Method</div>
<div class="t" style="left:1241.00px;top:751.00px;font-size:21.22px;color:#222;transform:scaleX(1.0535);transform-origin:left center;-webkit-text-stroke:0.8px #222;">Wave Start Time &amp; Date</div>
<div class="t" style="left:1517.40px;top:751.00px;font-size:21.22px;color:#222;transform:scaleX(1.0358);transform-origin:left center;-webkit-text-stroke:0.8px #222;">Seller Name</div>
<div class="t" style="left:1675.60px;top:751.00px;font-size:21.22px;color:#222;transform:scaleX(1.0629);transform-origin:left center;-webkit-text-stroke:0.8px #222;">Total Picklists</div>
<div class="clip" style="left:1826.5px;width:90.5px;top:741.00px;height:41.22px"><div class="t" style="left:1841.40px;top:751.00px;font-size:21.22px;color:#222;transform:scaleX(1.1562);transform-origin:left center;-webkit-text-stroke:0.8px #222;left:14.90px;top:10px">Assignee</div></div>
<div class="t" style="left:1947.30px;top:751.00px;font-size:21.22px;color:#222;transform:scaleX(1.0864);transform-origin:left center;-webkit-text-stroke:0.8px #222;">Action</div>
<div class="t" style="left:552.20px;top:818.00px;font-size:17.88px;color:#222;-webkit-text-stroke:0.2px #222;">1</div>
<div class="t" style="left:612.50px;top:818.00px;font-size:17.88px;color:#5468fa;transform:scaleX(1.0375);transform-origin:left center;-webkit-text-stroke:0.2px #5468fa;">Wave 2</div>
<div class="t" style="left:788.40px;top:818.00px;font-size:17.88px;color:#222;transform:scaleX(1.0920);transform-origin:left center;-webkit-text-stroke:0.2px #222;">Complete Segregated Picking</div>
<div class="t" style="left:1238.48px;top:818.00px;font-size:17.88px;color:#222;transform:scaleX(1.0170);transform-origin:left center;-webkit-text-stroke:0.2px #222;">December 04, 2025 1:35 PM</div>
<div class="t" style="left:1516.20px;top:818.00px;font-size:17.88px;color:#222;-webkit-text-stroke:0.2px #222;">All</div>
<div class="t" style="left:1802.00px;top:818.00px;font-size:17.88px;color:#5468fa;-webkit-text-stroke:0.2px #5468fa;">2</div>
<div class="t" style="left:1840.00px;top:818.00px;font-size:17.88px;color:#222;-webkit-text-stroke:0.2px #222;">-</div>
<div class="t" style="left:552.00px;top:886.00px;font-size:17.88px;color:#222;-webkit-text-stroke:0.2px #222;">2</div>
<div class="t" style="left:612.50px;top:886.00px;font-size:17.88px;color:#5468fa;transform:scaleX(0.9675);transform-origin:left center;-webkit-text-stroke:0.2px #5468fa;">Wave 1</div>
<div class="t" style="left:788.40px;top:886.00px;font-size:17.88px;color:#222;transform:scaleX(1.0920);transform-origin:left center;-webkit-text-stroke:0.2px #222;">Complete Segregated Picking</div>
<div class="t" style="left:1238.48px;top:886.00px;font-size:17.88px;color:#222;transform:scaleX(1.0170);transform-origin:left center;-webkit-text-stroke:0.2px #222;">December 04, 2025 1:30 PM</div>
<div class="t" style="left:1516.20px;top:886.00px;font-size:17.88px;color:#222;-webkit-text-stroke:0.2px #222;">All</div>
<div class="t" style="left:1802.00px;top:886.00px;font-size:17.88px;color:#5468fa;-webkit-text-stroke:0.2px #5468fa;">3</div>
<div class="t" style="left:1840.00px;top:886.00px;font-size:17.88px;color:#222;-webkit-text-stroke:0.2px #222;">-</div>
<div class="t" style="left:552.00px;top:954.00px;font-size:17.88px;color:#222;-webkit-text-stroke:0.2px #222;">3</div>
<div class="t" style="left:612.50px;top:954.00px;font-size:17.88px;color:#5468fa;transform:scaleX(1.0509);transform-origin:left center;-webkit-text-stroke:0.2px #5468fa;">Wave 4</div>
<div class="t" style="left:787.31px;top:954.00px;font-size:17.88px;color:#222;transform:scaleX(1.0920);transform-origin:left center;-webkit-text-stroke:0.2px #222;">Partial Non-Segregated Picking</div>
<div class="t" style="left:1239.50px;top:954.00px;font-size:17.88px;color:#222;transform:scaleX(0.9891);transform-origin:left center;-webkit-text-stroke:0.2px #222;">August 19, 2025 3:47 PM</div>
<div class="t" style="left:1516.20px;top:954.00px;font-size:17.88px;color:#222;-webkit-text-stroke:0.2px #222;">All</div>
<div class="t" style="left:1802.00px;top:954.00px;font-size:17.88px;color:#5468fa;-webkit-text-stroke:0.2px #5468fa;">1</div>
<div class="clip" style="left:1826.5px;width:90.5px;top:944.00px;height:37.88px"><div class="t" style="left:1840.00px;top:954.00px;font-size:17.88px;color:#222;transform:scaleX(1.0746);transform-origin:left center;-webkit-text-stroke:0.2px #222;left:13.50px;top:10px">Atharv Jain</div></div>
<div class="t" style="left:552.00px;top:1021.00px;font-size:17.88px;color:#222;-webkit-text-stroke:0.2px #222;">4</div>
<div class="t" style="left:612.50px;top:1021.00px;font-size:17.88px;color:#5468fa;transform:scaleX(1.0375);transform-origin:left center;-webkit-text-stroke:0.2px #5468fa;">Wave 3</div>
<div class="t" style="left:787.31px;top:1021.00px;font-size:17.88px;color:#222;transform:scaleX(1.0920);transform-origin:left center;-webkit-text-stroke:0.2px #222;">Partial Non-Segregated Picking</div>
<div class="t" style="left:1239.50px;top:1021.00px;font-size:17.88px;color:#222;transform:scaleX(0.9842);transform-origin:left center;-webkit-text-stroke:0.2px #222;">August 19, 2025 3:27 PM</div>
<div class="t" style="left:1516.20px;top:1021.00px;font-size:17.88px;color:#222;-webkit-text-stroke:0.2px #222;">All</div>
<div class="t" style="left:1802.00px;top:1021.00px;font-size:17.88px;color:#5468fa;-webkit-text-stroke:0.2px #5468fa;">1</div>
<div class="t" style="left:1840.00px;top:1021.00px;font-size:17.88px;color:#222;-webkit-text-stroke:0.2px #222;">-</div>
<div class="t" style="left:541.60px;top:1113.00px;font-size:18.31px;color:#222;transform:scaleX(0.9665);transform-origin:left center;-webkit-text-stroke:0.5px #222;">20</div>
<div class="t" style="left:616.79px;top:1114.00px;font-size:18.02px;color:#666;transform:scaleX(1.0080);transform-origin:left center;-webkit-text-stroke:0.2px #666;">Items per page</div>
<div class="t" style="left:1680.10px;top:1112.00px;font-size:18.02px;color:#555;letter-spacing:-0.358px;transform:scaleX(0.9000);transform-origin:left center;-webkit-text-stroke:0.2px #555;">1 of 1 Page</div>
<div class="t" style="left:1893.50px;top:1112.00px;font-size:18.02px;color:#444;-webkit-text-stroke:0.2px #444;">1</div>
</body></html>
